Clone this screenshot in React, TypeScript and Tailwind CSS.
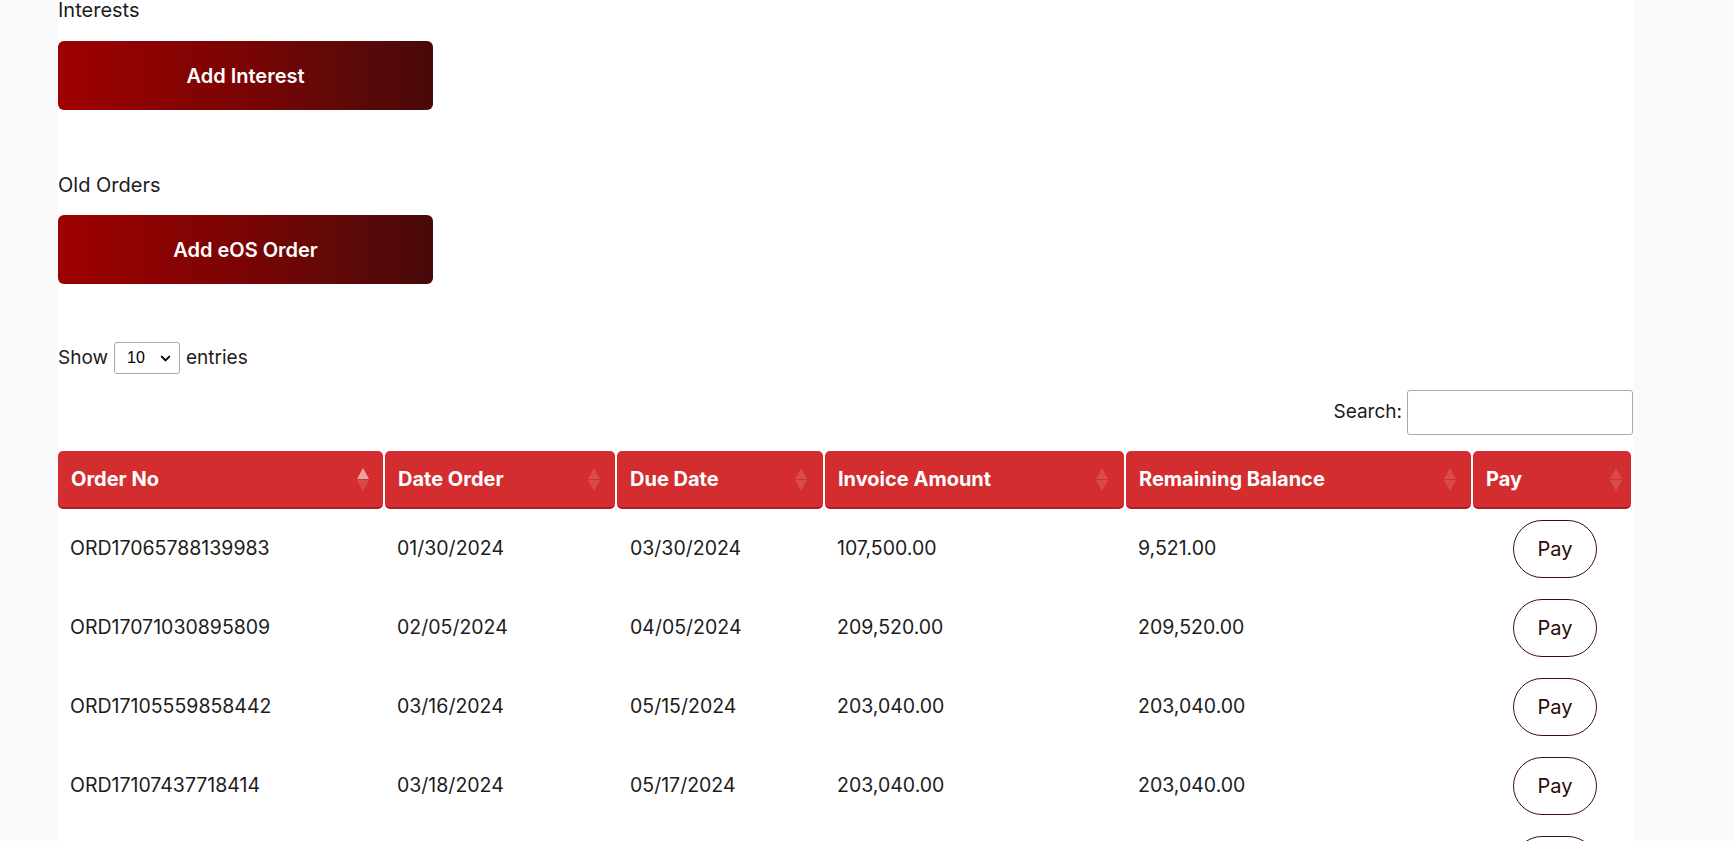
import React from 'react';
import { ChevronDown } from 'lucide-react';

type Order = {
  no: string;
  date: string;
  due: string;
  invoice: string;
  balance: string;
};

const orders: Order[] = [
  { no: 'ORD17065788139983', date: '01/30/2024', due: '03/30/2024', invoice: '107,500.00', balance: '9,521.00' },
  { no: 'ORD17071030895809', date: '02/05/2024', due: '04/05/2024', invoice: '209,520.00', balance: '209,520.00' },
  { no: 'ORD17105559858442', date: '03/16/2024', due: '05/15/2024', invoice: '203,040.00', balance: '203,040.00' },
  { no: 'ORD17107437718414', date: '03/18/2024', due: '05/17/2024', invoice: '203,040.00', balance: '203,040.00' },
  { no: 'ORD17107437718499', date: '03/20/2024', due: '05/19/2024', invoice: '203,040.00', balance: '203,040.00' },
];

const columns = [
  { label: 'Order No', sort: 'asc', iconRight: 'right-[14px]' },
  { label: 'Date Order', sort: 'none', iconRight: 'right-[15px]' },
  { label: 'Due Date', sort: 'none', iconRight: 'right-[16px]' },
  { label: 'Invoice Amount', sort: 'none', iconRight: 'right-[16px]' },
  { label: 'Remaining Balance', sort: 'none', iconRight: 'right-[15px]' },
  { label: 'Pay', sort: 'none', iconRight: 'right-[9px]' },
];

const gridCols = 'grid grid-cols-[325px_230px_206px_299px_345px_158px] gap-x-[2px]';

const SortIcon: React.FC<{ sort: string }> = ({ sort }) => (
  <svg width="12" height="23" viewBox="0 0 12 23">
    <polygon points="0,11 6,0 12,11" fill="#ffffff" fillOpacity={sort === 'asc' ? 0.55 : 0.14} />
    <polygon points="0,12 6,23 12,12" fill="#ffffff" fillOpacity={0.14} />
  </svg>
);

const GradientButton: React.FC<{ label: string }> = ({ label }) => (
  <button className="w-[375px] h-[69px] rounded-[6px] bg-gradient-to-r from-[#9e0000] via-[#7a0404] to-[#480909] text-white text-[20px] font-semibold">
    {label}
  </button>
);

export default function App() {
  return (
    <div className="h-screen bg-[#fafafa] font-['Inter',sans-serif] text-[#1c1c1c] overflow-hidden">
      <div className="ml-[58px] w-[1575px] min-h-[841px] bg-white">
        {/* Interests */}
        <div className="-mt-[2px] text-[20px] leading-[24px]">Interests</div>
        <div className="mt-[19px]">
          <GradientButton label="Add Interest" />
        </div>

        {/* Old Orders */}
        <div className="mt-[63px] text-[20px] leading-[24px]">Old Orders</div>
        <div className="mt-[18px]">
          <GradientButton label="Add eOS Order" />
        </div>

        {/* Length selector */}
        <div className="mt-[58px] flex items-center gap-[6px] text-[19px]">
          <span>Show</span>
          <div className="relative w-[66px] h-[32px] border border-[#a8a8a8] rounded-[3px] bg-white">
            <select className="appearance-none w-full h-full bg-transparent pl-[12px] text-[16px] font-['Liberation_Sans',sans-serif] text-black outline-none">
              <option>10</option>
              <option>25</option>
              <option>50</option>
              <option>100</option>
            </select>
            <ChevronDown className="absolute right-[6px] top-[8px] w-[15px] h-[15px] pointer-events-none text-black" strokeWidth={3.2} />
          </div>
          <span>entries</span>
        </div>

        {/* Search */}
        <div className="mt-[16px] flex items-center justify-end gap-[5px] text-[19px]">
          <span>Search:</span>
          <input className="w-[226px] h-[45px] border border-[#a8a8a8] rounded-[3px] px-2 outline-none" />
        </div>

        {/* Table */}
        <div className="mt-[16px]">
          <div className={gridCols}>
            {columns.map((c) => (
              <div
                key={c.label}
                className="relative h-[58px] bg-[#d32d2f] rounded-[5px] border-b-2 border-[#a91f22] flex items-center pl-[13px] text-white text-[20px] font-bold"
              >
                {c.label}
                <span className={`absolute top-[17px] ${c.iconRight}`}>
                  <SortIcon sort={c.sort} />
                </span>
              </div>
            ))}
          </div>

          {orders.map((o) => (
            <div key={o.no} className={`${gridCols} h-[79px] items-center text-[19.5px]`}>
              <div className="pl-[12px]">{o.no}</div>
              <div className="pl-[12px]">{o.date}</div>
              <div className="pl-[13px]">{o.due}</div>
              <div className="pl-[12px]">{o.invoice}</div>
              <div className="pl-[12px]">{o.balance}</div>
              <div className="pl-[40px]">
                <button className="w-[84px] h-[58px] rounded-full border border-[#3d0d0d] text-[20px] text-[#2a0a0a]">
                  Pay
                </button>
              </div>
            </div>
          ))}
        </div>
      </div>
    </div>
  );
}
